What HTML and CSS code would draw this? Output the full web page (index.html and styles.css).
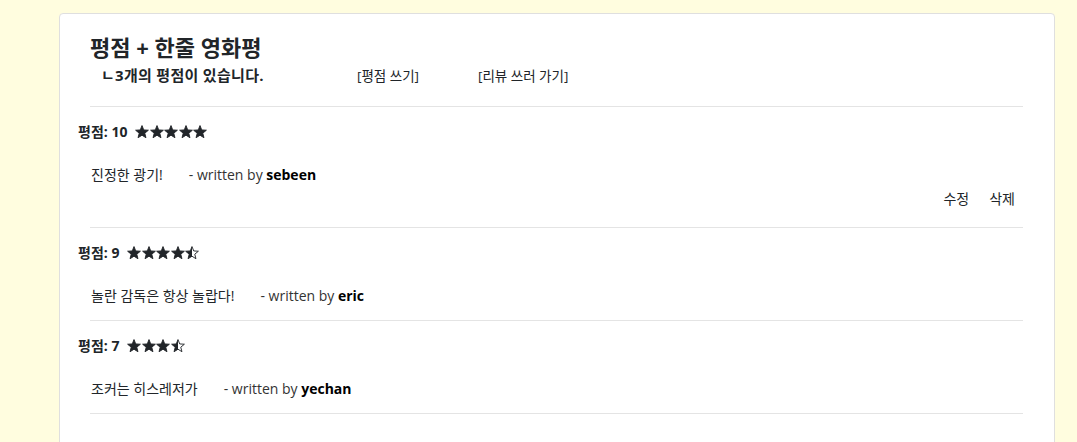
FILE: index.html
```html
<!DOCTYPE html>
<html lang="ko">
<head>
<meta charset="utf-8">
<link rel="stylesheet" href="styles.css">
</head>
<body>
<svg width="0" height="0" class="defs">
  <defs>
    <symbol id="star" viewBox="0 0 24 24">
      <polygon points="12,1 14.94,8.45 22.94,8.95 16.76,14.05 18.76,21.8 12,17.5 5.24,21.8 7.24,14.05 1.06,8.95 9.06,8.45" fill="currentColor" stroke="currentColor" stroke-width="1.6" stroke-linejoin="round"/>
    </symbol>
    <symbol id="half" viewBox="0 0 24 24">
      <polygon points="12,1 12,17.5 5.24,21.8 7.24,14.05 1.06,8.95 9.06,8.45" fill="currentColor"/>
      <polygon points="12,1 14.94,8.45 22.94,8.95 16.76,14.05 18.76,21.8 12,17.5 5.24,21.8 7.24,14.05 1.06,8.95 9.06,8.45" fill="none" stroke="currentColor" stroke-width="1.6" stroke-linejoin="round"/>
    </symbol>
  </defs>
</svg>
<div class="card">
  <div class="head">
    <h4 class="title">평점 + 한줄 영화평</h4>
    <div class="subrow">
      <span class="count">ㄴ3개의 평점이 있습니다.</span>
      <a class="link link-write">[평점 쓰기]</a>
      <a class="link">[리뷰 쓰러 가기]</a>
    </div>
  </div>
  <hr class="rule">

  <div class="review">
    <div class="score"><span>평점: 10</span>
      <span class="stars">
        <svg class="st"><use href="#star"/></svg><svg class="st"><use href="#star"/></svg><svg class="st"><use href="#star"/></svg><svg class="st"><use href="#star"/></svg><svg class="st"><use href="#star"/></svg>
      </span>
    </div>
    <div class="comment"><span class="text">진정한 광기!</span><span class="by">- written by <b>sebeen</b></span></div>
    <div class="actions"><a>수정</a><a>삭제</a></div>
  </div>
  <hr class="rule">

  <div class="review">
    <div class="score"><span>평점: 9</span>
      <span class="stars">
        <svg class="st"><use href="#star"/></svg><svg class="st"><use href="#star"/></svg><svg class="st"><use href="#star"/></svg><svg class="st"><use href="#star"/></svg><svg class="st"><use href="#half"/></svg>
      </span>
    </div>
    <div class="comment"><span class="text">놀란 감독은 항상 놀랍다!</span><span class="by">- written by <b>eric</b></span></div>
  </div>
  <hr class="rule">

  <div class="review">
    <div class="score"><span>평점: 7</span>
      <span class="stars">
        <svg class="st"><use href="#star"/></svg><svg class="st"><use href="#star"/></svg><svg class="st"><use href="#star"/></svg><svg class="st"><use href="#half"/></svg>
      </span>
    </div>
    <div class="comment"><span class="text">조커는 히스레저가</span><span class="by">- written by <b>yechan</b></span></div>
  </div>
  <hr class="rule">
</div>
</body>
</html>
```

FILE: styles.css
```css
html, body {
  margin: 0;
  padding: 0;
}
body {
  background: #fffddf;
  font-family: "Open Sans", "Noto Sans CJK KR", sans-serif;
  color: #212529;
  font-size: 14px;
}
.defs {
  position: absolute;
  width: 0;
  height: 0;
}
.card {
  margin: 13px 22px 0 59px;
  background: #fff;
  border: 1px solid #dfdfdf;
  border-radius: 4px;
  padding: 20px 31px 30px 18px;
  min-height: 440px;
  box-sizing: border-box;
}
.head {
  padding-left: 12px;
}
.title {
  margin: 0;
  font-size: 22px;
  font-weight: 700;
  line-height: 26px;
  height: 26px;
}
.subrow {
  display: flex;
  align-items: baseline;
  margin-top: 4px;
  padding-left: 11px;
  height: 31px;
}
.count {
  font-weight: 700;
  font-size: 15px;
  letter-spacing: 0.3px;
  width: 256px;
}
.link {
  font-size: 13.5px;
  color: #212529;
}
.link-write {
  width: 121px;
}
.rule {
  margin: 11px 0 0 12px;
  border: 0;
  border-top: 1px solid #e4e4e4;
  height: 0;
}
.review {
  padding-top: 15px;
  padding-bottom: 3px;
}
.score {
  display: flex;
  align-items: center;
  font-weight: 700;
  font-size: 14px;
  line-height: 20px;
}
.stars {
  display: flex;
  margin-left: 8px;
  gap: 0.5px;
}
.st {
  width: 14px;
  height: 14px;
  color: #212529;
}
.comment {
  margin-top: 23px;
  padding-left: 13px;
  line-height: 20px;
  display: flex;
}
.comment .text {
  margin-right: 26px;
}
.comment .by {
  color: #333;
}
.comment b {
  color: #000;
}
.actions {
  display: flex;
  justify-content: flex-end;
  gap: 20px;
  padding-right: 8px;
  font-size: 14px;
  margin-top: 5px;
  margin-bottom: 5px;
  line-height: 18px;
}
```
